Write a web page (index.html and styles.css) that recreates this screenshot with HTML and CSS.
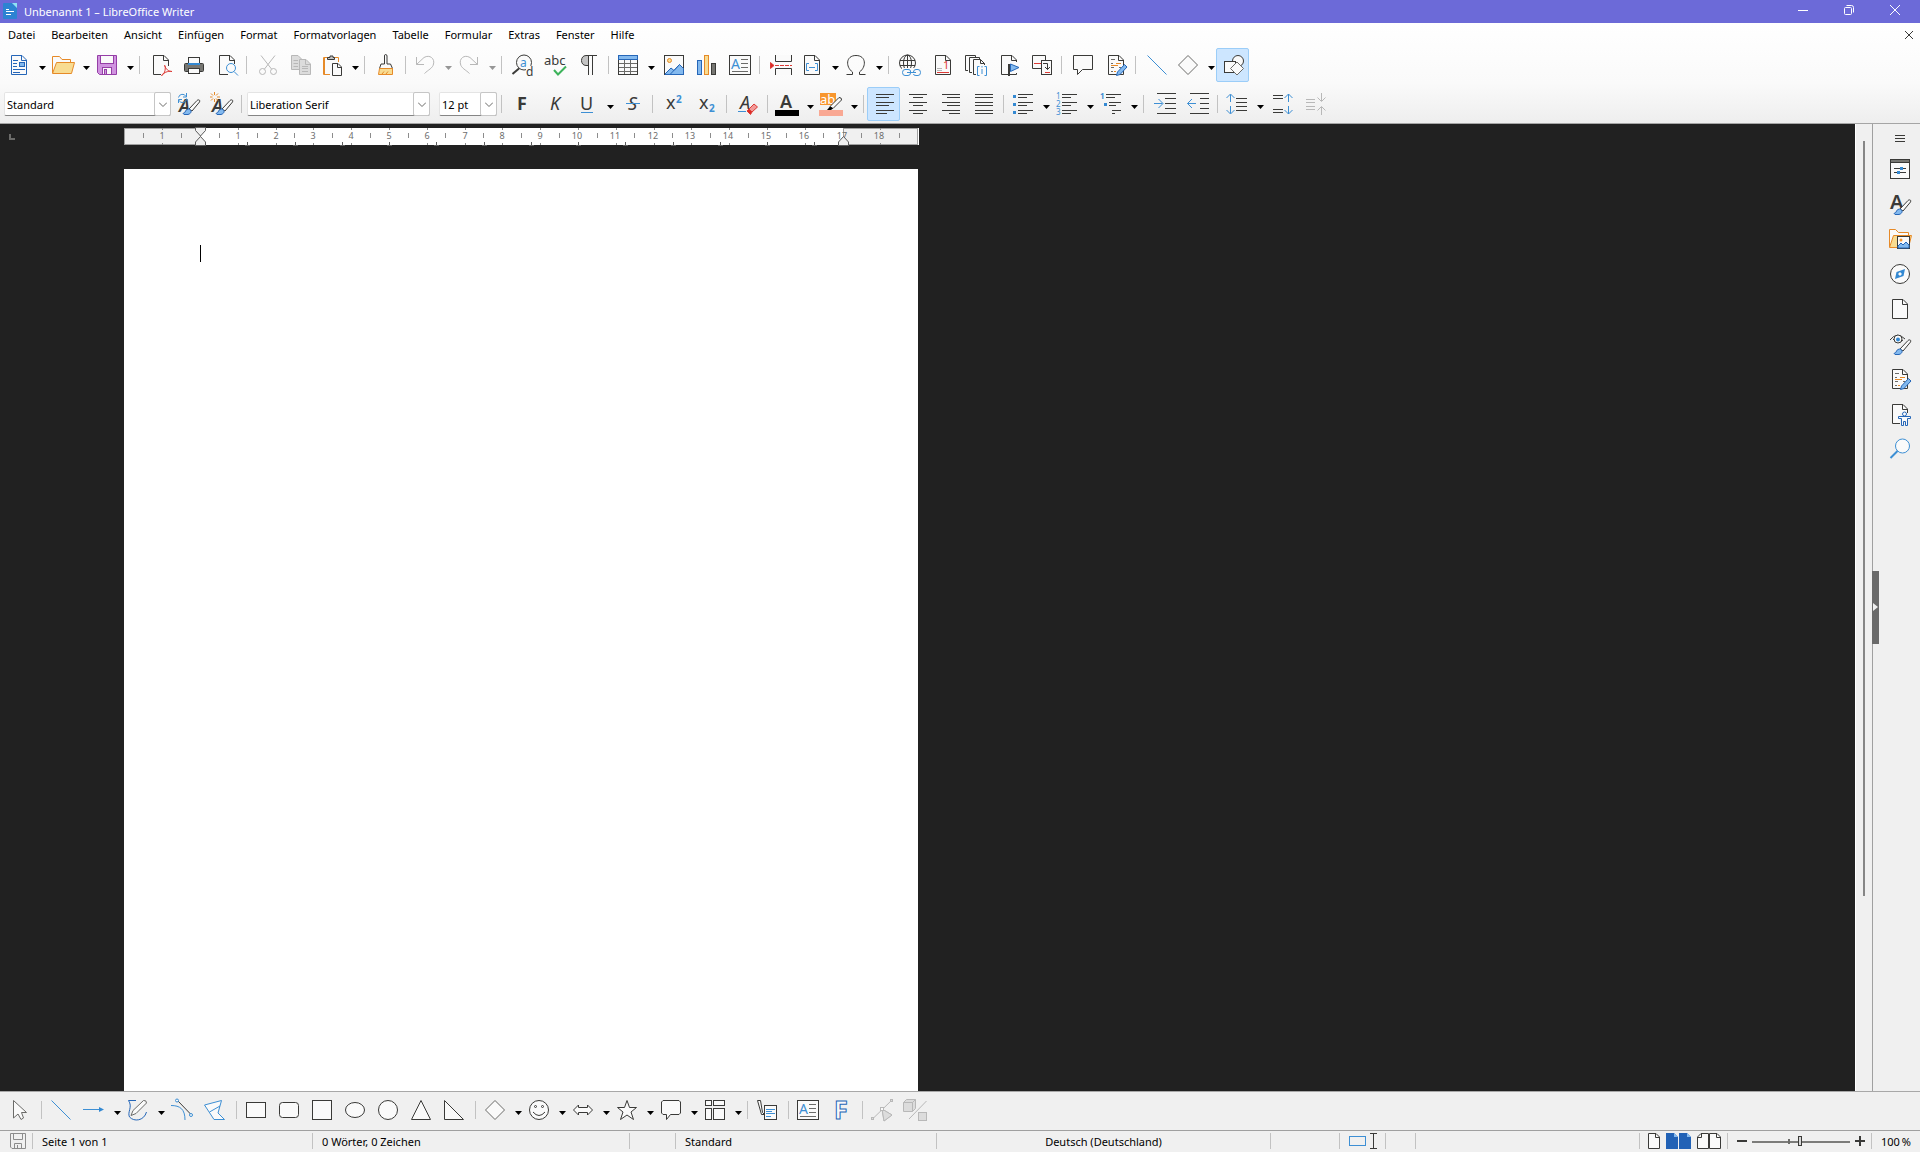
FILE: index.html
```html
<!DOCTYPE html>
<html lang="de">
<head>
<meta charset="utf-8">
<title>Unbenannt 1 – LibreOffice Writer</title>
<meta name="viewport" content="width=device-width, initial-scale=1.0">
<link rel="stylesheet" href="styles.css">
</head>
<body>

<!-- Shared symbols -->
<svg class="symbols" aria-hidden="true">
	<symbol id="i-drop" viewBox="0 0 7 4"><path class="f-black" d="M0 0H7L3.500 4Z"/></symbol>
	<symbol id="i-page" viewBox="0 0 24 24"><path class="f-paper" d="M4.500 2.500H15L19.500 7V21.500H4.500Z"/><path d="M14.500 2.500V7.500H19.500"/></symbol>
	<symbol id="i-brush" viewBox="0 0 24 24"><path class="f-paper" d="M12 17L20 8.500C21 7.500 23.500 7.500 22.500 10L15 19Z"/><path class="s-navy f-sky" d="M6 21.500C9 21 8 17 11.500 17C15 17.500 15 21.500 11 22.500H7Z"/></symbol>
	<symbol id="i-diamond" viewBox="0 0 24 24"><path class="f-paper s-mid" d="M12 2.500L21.500 12L12 21.500L2.500 12Z"/></symbol>
	<symbol id="i-line" viewBox="0 0 24 24"><path class="s-blue" d="M2.500 2.500L21.500 21.500"/></symbol>
	<symbol id="i-textbox" viewBox="0 0 24 24"><rect class="f-paper" x="1.500" y="2.500" width="21" height="19"/><text class="t-blue" x="3" y="16" font-size="14">A</text><path class="s-mid" d="M13 6.500H20M13 10.500H20M13 14.500H20M4 18.500H20"/></symbol>
	<symbol id="i-track" viewBox="0 0 24 24"><path class="f-paper" d="M4.500 2.500H15L19.500 7V21.500H4.500Z"/><path d="M14.500 2.500V7.500H19.500"/><path class="s-mid" d="M7 6.500H11M7 10.500H9M7 14.500H10M15 14.500H17M7 18.500H9"/><path class="s-orange" d="M12 10.500H17M7 12.500H14M10 18.500H12"/><path class="s-navy f-sky" d="M12.500 22.500L13.500 19L20.500 11.500L23 14L16 21.500Z"/></symbol>
</svg>

<header class="titlebar">
	<svg class="app-icon" viewBox="0 0 14 16"><path class="f-app" d="M1 0H9L14 5V15Q14 16 13 16H1Q0 16 0 15V1Q0 0 1 0Z"/><path class="f-cyan" d="M9 0H14V5Z"/><path class="s-white" d="M3 6.500H6M3 8.500H11M3 11.500H8"/></svg>
	<h1 class="title">Unbenannt 1 – LibreOffice Writer</h1>
	<div class="window-buttons">
		<button class="win-btn" aria-label="Minimieren"><svg viewBox="0 0 10 10"><path class="s-white" d="M0 5.500H10"/></svg></button>
		<button class="win-btn" aria-label="Verkleinern"><svg viewBox="0 0 10 10"><rect class="s-white" x=".5" y="2.500" width="7" height="7" rx="1"/><path class="s-white" d="M2.500 .5H7.500Q9.500 .5 9.500 2.500V7.500"/></svg></button>
		<button class="win-btn" aria-label="Schließen"><svg viewBox="0 0 10 10"><path class="s-white" d="M0 0L10 10M10 0L0 10"/></svg></button>
	</div>
</header>

<div class="toolbars">
	<nav class="menubar">
		<button class="menu-item">Datei</button>
		<button class="menu-item">Bearbeiten</button>
		<button class="menu-item">Ansicht</button>
		<button class="menu-item">Einfügen</button>
		<button class="menu-item">Format</button>
		<button class="menu-item">Formatvorlagen</button>
		<button class="menu-item">Tabelle</button>
		<button class="menu-item">Formular</button>
		<button class="menu-item">Extras</button>
		<button class="menu-item">Fenster</button>
		<button class="menu-item">Hilfe</button>
		<button class="close-doc" aria-label="Dokument schließen"><svg viewBox="0 0 8 8"><path d="M0 0L8 8M8 0L0 8"/></svg></button>
	</nav>

	<!-- Standard toolbar -->
	<div class="toolbar">
		<div class="split">
			<button class="tool" aria-label="Neu"><svg class="icon" viewBox="0 0 24 24"><path class="s-navy f-paper" d="M4.500 2.500H15L19.500 7V21.500H4.500Z"/><path class="s-navy" d="M14.500 2.500V7.500H19.500M6 7.500H11M6 10.500H10M6 13.500H10M6 16.500H18M6 19.500H13"/><rect class="f-sky s-navy" x="12.500" y="9.500" width="5" height="4"/></svg></button>
			<button class="drop" aria-label="Neu, Auswahl"><svg><use href="#i-drop"/></svg></button>
		</div>
		<div class="split">
			<button class="tool" aria-label="Öffnen"><svg class="icon" viewBox="0 0 24 24"><path class="s-orange f-paper" d="M1.500 20V3.500H8.500L11 6.500H19.500V9.500"/><path class="s-orange f-yellow" d="M1.500 20.500L5.500 9.500H23.500L20.500 20.500Z"/></svg></button>
			<button class="drop" aria-label="Öffnen, Auswahl"><svg><use href="#i-drop"/></svg></button>
		</div>
		<div class="split">
			<button class="tool" aria-label="Speichern"><svg class="icon" viewBox="0 0 24 24"><path class="s-purple f-lilac" d="M2.500 2.500H21.500V21.500H4.500L2.500 19.500Z"/><rect class="s-purple f-paper" x="5.500" y="2.500" width="13" height="8"/><rect class="s-purple f-paper" x="7.500" y="14.500" width="9" height="7"/><rect class="s-purple f-lilac" x="9.500" y="16.500" width="2" height="5"/></svg></button>
			<button class="drop" aria-label="Speichern, Auswahl"><svg><use href="#i-drop"/></svg></button>
		</div>
		<span class="sep"></span>
		<button class="tool" aria-label="Als PDF exportieren"><svg class="icon" viewBox="0 0 24 24"><path class="f-paper" d="M12 21.500H4.500V2.500H15L19.500 7V13"/><path d="M14.500 2.500V7.500H19.500"/><path class="s-red" d="M15.500 12.500C17 16 19 18.500 23 18.500C19 17.500 14 20 12.500 22.500C15 22 17 17 16 12.500Z"/></svg></button>
		<button class="tool" aria-label="Drucken"><svg class="icon" viewBox="0 0 24 24"><rect class="f-paper" x="6.500" y="4.500" width="11" height="6"/><rect class="f-mid" x="2.500" y="10.500" width="19" height="8" rx="1"/><path class="f-azure" d="M6 10H18V12H6Z"/><rect class="f-paper" x="6.500" y="15.500" width="11" height="5"/></svg></button>
		<button class="tool" aria-label="Druckvorschau"><svg class="icon" viewBox="0 0 24 24"><path class="f-paper" d="M13 21.500H4.500V2.500H15L19.500 7V11"/><path d="M14.500 2.500V7.500H19.500"/><circle class="s-blue f-paper" cx="16" cy="15" r="4.500"/><path class="s-blue" d="M19 18.500L23 22.500"/></svg></button>
		<span class="sep"></span>
		<button class="tool" aria-label="Ausschneiden" disabled><svg class="icon dim" viewBox="0 0 24 24"><path d="M5 2.500L15.500 16M19 2.500L8.500 16"/><circle cx="6.500" cy="18.500" r="3"/><circle cx="17.500" cy="18.500" r="3"/></svg></button>
		<button class="tool" aria-label="Kopieren" disabled><svg class="icon dim" viewBox="0 0 24 24"><path class="f-dim" d="M2.500 2.500H9L12.500 6V16.500H2.500Z"/><path class="f-dim" d="M10.500 6.500H17L21.500 11V21.500H10.500Z"/><path d="M16.500 6.500V11.500H21.500M4.500 7.500H9M4.500 10.500H9M4.500 13.500H9M13 13.500H19M13 15.500H19M13 18.500H19"/></svg></button>
		<div class="split">
			<button class="tool" aria-label="Einfügen"><svg class="icon" viewBox="0 0 24 24"><path class="s-orange f-paper" d="M10 21.500H3.500V4.500H18.500V9"/><path class="s-orange" d="M4.500 5V21"/><path class="f-grey" d="M7.500 6.500V4.500H10V3H13V4.500H14.500V6.500Z"/><path class="f-paper" d="M12.500 10.500H18L21.500 14V22.500H12.500Z"/><path d="M17.500 10.500V14.500H21.500"/></svg></button>
			<button class="drop" aria-label="Einfügen, Auswahl"><svg><use href="#i-drop"/></svg></button>
		</div>
		<span class="sep"></span>
		<button class="tool" aria-label="Format übertragen"><svg class="icon" viewBox="0 0 24 24"><path class="f-paper" d="M10.500 11V3Q10.500 1.500 11.500 1.500Q13 1.500 13 3V11H16.500L18.500 15.500H5.500L7 11Z"/><path class="s-orange f-yellow" d="M5.500 15.500H18.500V21.500H4.500Z"/><path class="s-orange" d="M8 21L10 18.500M12 21L14 18.500"/></svg></button>
		<span class="sep"></span>
		<div class="split">
			<button class="tool" aria-label="Rückgängig" disabled><svg class="icon dim" viewBox="0 0 24 24"><path d="M3.500 4V11.500H11M3.500 11.500L11 4.500C17 1 22 6 20.500 11C20 15 15 17 11.500 20.500"/></svg></button>
			<button class="drop" aria-label="Rückgängig, Auswahl" disabled><svg><use href="#i-drop"/></svg></button>
		</div>
		<div class="split">
			<button class="tool" aria-label="Wiederherstellen" disabled><svg class="icon dim" viewBox="0 0 24 24"><path d="M20.500 4V11.500H13M20.500 11.500L13 4.500C7 1 2 6 3.500 11C4 15 9 17 12.500 20.500"/></svg></button>
			<button class="drop" aria-label="Wiederherstellen, Auswahl" disabled><svg><use href="#i-drop"/></svg></button>
		</div>
		<span class="sep"></span>
		<button class="tool" aria-label="Suchen und Ersetzen"><svg class="icon" viewBox="0 0 24 24"><circle class="f-paper" cx="13" cy="9.500" r="7.500"/><path class="w2" d="M8 15.500L1.500 21"/><text class="t-blue" x="9" y="14" font-size="12">a</text><rect class="f-bg nostroke" x="15" y="13" width="9" height="10"/><text class="t-dark" x="15" y="23" font-size="12">d</text></svg></button>
		<button class="tool" aria-label="Rechtschreibung"><svg class="icon" viewBox="0 0 24 24"><text class="t-dark" x="0" y="12" font-size="13">abc</text><path class="s-green w2" d="M10 17L14 21.500L22 13.500"/></svg></button>
		<button class="tool" aria-label="Formatierungszeichen"><svg class="icon" viewBox="0 0 24 24"><path class="f-grey" d="M11.500 2.500H9C3 2.500 3 12.500 9 12.500H11.500Z"/><path d="M10 2.500H20M11.500 2.500V22M15.500 2.500V22"/></svg></button>
		<span class="sep"></span>
		<div class="split">
			<button class="tool" aria-label="Tabelle"><svg class="icon" viewBox="0 0 24 24"><rect class="f-paper" x="2.500" y="2.500" width="19" height="19"/><path class="s-mid" d="M3 10.500H21M3 14.500H21M3 18.500H21M8.500 7V21M14.500 7V21"/><rect class="s-navy f-sky" x="2.500" y="2.500" width="19" height="4"/></svg></button>
			<button class="drop" aria-label="Tabelle, Auswahl"><svg><use href="#i-drop"/></svg></button>
		</div>
		<button class="tool" aria-label="Bild"><svg class="icon" viewBox="0 0 24 24"><rect class="f-paper" x="2.500" y="2.500" width="19" height="19"/><circle class="s-orange f-yellow" cx="7.500" cy="7.500" r="2"/><path class="s-navy f-sky" d="M3 21L9 15L12 17.500L17.500 11.500L21.500 15.500V21.500H3Z"/><path class="s-navy" d="M8.500 21L17.500 11.500"/></svg></button>
		<button class="tool" aria-label="Diagramm"><svg class="icon" viewBox="0 0 24 24"><rect class="s-navy f-sky" x="2.500" y="7.500" width="4" height="14"/><rect class="s-orange f-yellow" x="9.500" y="2.500" width="4" height="19"/><rect class="f-mid" x="16.500" y="10.500" width="4" height="11"/></svg></button>
		<button class="tool" aria-label="Textfeld"><svg class="icon"><use href="#i-textbox"/></svg></button>
		<span class="sep"></span>
		<button class="tool" aria-label="Seitenumbruch"><svg class="icon" viewBox="0 0 24 24"><path class="f-paper" d="M6.500 2V8.500H22.500V2M6.500 22V15.500H22.500V22"/><path class="s-red" d="M6 12.500H23" stroke-dasharray="4 1"/><path class="s-red f-red" d="M1.500 9.500L5 12.500L1.500 15.500Z"/></svg></button>
		<div class="split">
			<button class="tool" aria-label="Feldbefehl"><svg class="icon" viewBox="0 0 24 24"><use href="#i-page"/><path class="s-blue" d="M9 10.500H6.500V17.500H9M15 10.500H17.500V17.500H15M9 14.500H15"/></svg></button>
			<button class="drop" aria-label="Feldbefehl, Auswahl"><svg><use href="#i-drop"/></svg></button>
		</div>
		<div class="split">
			<button class="tool" aria-label="Sonderzeichen"><svg class="icon" viewBox="0 0 24 24"><path d="M2.500 21.500H8.500V19C1.500 14 1.500 2.500 12 2.500C22.500 2.500 22.500 14 15.500 19V21.500H21.500"/></svg></button>
			<button class="drop" aria-label="Sonderzeichen, Auswahl"><svg><use href="#i-drop"/></svg></button>
		</div>
		<span class="sep"></span>
		<button class="tool" aria-label="Hyperlink"><svg class="icon" viewBox="0 0 24 24"><circle class="f-paper" cx="9.500" cy="10" r="8"/><ellipse cx="9.500" cy="10" rx="4" ry="8"/><path d="M2 7.500H17M2 12.500H17M9.500 2V18"/><rect class="f-bg nostroke" x="4" y="15" width="20" height="8"/><path class="s-blue" d="M10 16.500H7Q4.500 16.500 4.500 19.500Q4.500 22.500 7 22.500H10Q12.500 22.500 12.500 20M15.500 19Q15.500 16.500 18 16.500H20Q22.500 16.500 22.500 19.500Q22.500 22.500 20 22.500H18Q15.500 22.500 15.500 21M12.500 19V18Q12.500 16.500 10 16.500M9 19.500H18"/></svg></button>
		<button class="tool" aria-label="Fußnote"><svg class="icon" viewBox="0 0 24 24"><use href="#i-page"/><text class="t-red" x="12" y="16" font-size="11">1</text><path class="s-grey" d="M6 15.500H11M6 17.500H11"/><path class="s-red" d="M6 19.500H18"/></svg></button>
		<button class="tool" aria-label="Endnote"><svg class="icon" viewBox="0 0 24 24"><path class="f-paper" d="M4 17.500H1.500V2.500H11.500V4"/><path class="f-paper" d="M8 19.500H5.500V4.500H15.500V6"/><path class="f-paper" d="M12 21.500H9.500V6.500H16.500L20.500 10.500V12"/><path d="M16.500 6.500V10.500H20.500"/><path class="s-blue" d="M15.500 13.500H13.500V22.500H15.500M20.500 13.500H22.500V22.500H20.500M18 13V14.500M18 16V21"/></svg></button>
		<button class="tool" aria-label="Lesezeichen"><svg class="icon" viewBox="0 0 24 24"><use href="#i-page"/><rect class="f-bg nostroke" x="14" y="9" width="7" height="11"/><path class="w2" d="M12 11V23"/><path class="s-navy f-sky" d="M13.500 11L22 14.500L13.500 18.500Z"/></svg></button>
		<button class="tool" aria-label="Querverweis"><svg class="icon" viewBox="0 0 24 24"><path class="f-paper" d="M11 15.500H2.500V2.500H15.500V7"/><rect class="f-paper" x="11.500" y="7.500" width="10" height="14"/><path class="s-red" d="M4 10.500H11M15 19.500H20"/><path d="M13 10.500H17.500V16.500M15 14L17.500 16.500L20 14"/></svg></button>
		<span class="sep"></span>
		<button class="tool" aria-label="Kommentar"><svg class="icon" viewBox="0 0 24 24"><path class="f-paper" d="M2.500 2.500H21.500V16.500H11.500L6.500 21.500V16.500H2.500Z"/></svg></button>
		<button class="tool" aria-label="Änderungen aufzeichnen"><svg class="icon"><use href="#i-track"/></svg></button>
		<span class="sep"></span>
		<button class="tool" aria-label="Linie"><svg class="icon"><use href="#i-line"/></svg></button>
		<div class="split">
			<button class="tool" aria-label="Standardformen"><svg class="icon"><use href="#i-diamond"/></svg></button>
			<button class="drop" aria-label="Standardformen, Auswahl"><svg><use href="#i-drop"/></svg></button>
		</div>
		<button class="tool active" aria-label="Zeichnungsfunktionen"><svg class="icon" viewBox="0 0 24 24"><circle class="f-paper" cx="16" cy="8" r="5.500"/><rect class="f-paper" x="2.500" y="8.500" width="11" height="11"/><path class="f-paper s-mid" d="M15 9L21.500 15.500L15 22L8.500 15.500Z"/></svg></button>
	</div>

	<!-- Formatting toolbar -->
	<div class="toolbar format-bar">
		<div class="combo combo-style">
			<select aria-label="Absatzvorlage"><option>Standard</option></select>
			<span class="combo-arrow"><svg viewBox="0 0 8 5"><path class="s-mid" d="M0 .5L4 4.500L8 .5"/></svg></span>
		</div>
		<button class="tool" aria-label="Vorlage aktualisieren"><svg class="icon" viewBox="0 0 24 24"><text class="t-dark semi italic" x="2" y="20" font-size="18">A</text><use href="#i-brush"/><path class="s-blue" d="M1.500 5.500A4 4 0 0 1 9 4.500M9.500 1V5H6M9.500 6.500A4 4 0 0 1 2 8.500M1.500 11V7.500H5"/></svg></button>
		<button class="tool" aria-label="Neue Vorlage"><svg class="icon" viewBox="0 0 24 24"><text class="t-dark semi italic" x="2" y="20" font-size="18">A</text><use href="#i-brush"/><path class="s-orange" d="M4.500 0V3M4.500 7V10M0 5H2.500M7 5H10M1 1.500L3 3.500M8 1.500L6 3.500M1 8.500L3 6.500M8 8.500L6 6.500"/></svg></button>
		<span class="sep"></span>
		<div class="combo combo-font">
			<select aria-label="Schriftart"><option>Liberation Serif</option></select>
			<span class="combo-arrow"><svg viewBox="0 0 8 5"><path class="s-mid" d="M0 .5L4 4.500L8 .5"/></svg></span>
		</div>
		<div class="combo combo-size">
			<select aria-label="Schriftgröße"><option>12 pt</option></select>
			<span class="combo-arrow"><svg viewBox="0 0 8 5"><path class="s-mid" d="M0 .5L4 4.500L8 .5"/></svg></span>
		</div>
		<span class="sep"></span>
		<button class="tool" aria-label="Fett"><svg class="icon" viewBox="0 0 24 24"><text class="t-dark bold" x="6" y="18" font-size="18">F</text></svg></button>
		<button class="tool" aria-label="Kursiv"><svg class="icon" viewBox="0 0 24 24"><text class="t-dark italic" x="6" y="18" font-size="18">K</text></svg></button>
		<div class="split">
			<button class="tool" aria-label="Unterstrichen"><svg class="icon" viewBox="0 0 24 24"><text class="t-dark" x="5" y="18" font-size="18">U</text><path class="s-blue" d="M6 20.500H18"/></svg></button>
			<button class="drop" aria-label="Unterstrichen, Auswahl"><svg><use href="#i-drop"/></svg></button>
		</div>
		<button class="tool" aria-label="Durchgestrichen"><svg class="icon" viewBox="0 0 24 24"><text class="t-dark italic" x="7" y="18" font-size="18">S</text><path class="s-blue" d="M5 11.500H19"/></svg></button>
		<span class="sep"></span>
		<button class="tool" aria-label="Hochgestellt"><svg class="icon" viewBox="0 0 24 24"><text class="t-dark" x="4" y="17" font-size="18">x</text><text class="t-blue bold" x="14" y="11" font-size="10">2</text></svg></button>
		<button class="tool" aria-label="Tiefgestellt"><svg class="icon" viewBox="0 0 24 24"><text class="t-dark" x="4" y="17" font-size="18">x</text><text class="t-blue bold" x="14" y="20" font-size="10">2</text></svg></button>
		<span class="sep"></span>
		<button class="tool" aria-label="Formatierung löschen"><svg class="icon" viewBox="0 0 24 24"><text class="t-dark italic" x="4" y="17" font-size="18">A</text><path class="s-blue" d="M2 19.500H10"/><path class="s-red f-pink" d="M13 17L18 12L21.500 15L16 20Z"/><path class="s-red f-red" d="M11 19L13 17L16 20L14.500 22.500Z"/></svg></button>
		<span class="sep"></span>
		<div class="split">
			<button class="tool" aria-label="Schriftfarbe"><svg class="icon" viewBox="0 0 24 24"><text class="t-dark semi" x="5" y="16" font-size="18">A</text><path class="f-black" d="M0 18H24V24H0Z"/></svg></button>
			<button class="drop" aria-label="Schriftfarbe, Auswahl"><svg><use href="#i-drop"/></svg></button>
		</div>
		<div class="split">
			<button class="tool" aria-label="Zeichenhervorhebung"><svg class="icon" viewBox="0 0 24 24"><path class="f-amber" d="M1 1H17V13H1Z"/><text class="t-white" x="1" y="12" font-size="13">ab</text><path class="f-salmon" d="M0 18H24V24H0Z"/><path class="f-paper" d="M11 14.500L20 5.500Q23 5.500 22.500 8L14 16.500Z"/><path class="f-black" d="M8 18L11 14.500L14 16.500L12 18Z"/></svg></button>
			<button class="drop" aria-label="Zeichenhervorhebung, Auswahl"><svg><use href="#i-drop"/></svg></button>
		</div>
		<span class="sep"></span>
		<button class="tool active" aria-label="Linksbündig"><svg class="icon" viewBox="0 0 24 24"><path d="M3 2.500H21M3 5.500H16M3 10.500H21M3 13.500H16M3 18.500H21M3 21.500H14"/></svg></button>
		<button class="tool" aria-label="Zentriert"><svg class="icon" viewBox="0 0 24 24"><path d="M3 2.500H21M7 5.500H17M3 10.500H21M7 13.500H17M3 18.500H21M7 21.500H17"/></svg></button>
		<button class="tool" aria-label="Rechtsbündig"><svg class="icon" viewBox="0 0 24 24"><path d="M3 2.500H21M8 5.500H21M3 10.500H21M8 13.500H21M3 18.500H21M10 21.500H21"/></svg></button>
		<button class="tool" aria-label="Blocksatz"><svg class="icon" viewBox="0 0 24 24"><path d="M3 2.500H21M3 5.500H21M3 10.500H21M3 13.500H21M3 18.500H21M3 21.500H21"/></svg></button>
		<span class="sep"></span>
		<div class="split">
			<button class="tool" aria-label="Aufzählung"><svg class="icon" viewBox="0 0 24 24"><path d="M7 2.500H22M7 5.500H16M7 10.500H22M7 13.500H16M7 18.500H22M7 21.500H16"/><path class="f-azure" d="M2 3H5V6H2ZM2 11H5V14H2ZM2 19H5V22H2Z"/></svg></button>
			<button class="drop" aria-label="Aufzählung, Auswahl"><svg><use href="#i-drop"/></svg></button>
		</div>
		<div class="split">
			<button class="tool" aria-label="Nummerierung"><svg class="icon" viewBox="0 0 24 24"><path d="M7 2.500H22M7 5.500H16M7 10.500H22M7 13.500H16M7 18.500H22M7 21.500H16"/><text class="t-blue" x="1" y="7" font-size="8">1</text><text class="t-blue" x="1" y="15" font-size="8">2</text><text class="t-blue" x="1" y="23" font-size="8">3</text></svg></button>
			<button class="drop" aria-label="Nummerierung, Auswahl"><svg><use href="#i-drop"/></svg></button>
		</div>
		<div class="split">
			<button class="tool" aria-label="Gliederung"><svg class="icon" viewBox="0 0 24 24"><path d="M7 2.500H22M7 5.500H16M10 10.500H22M10 13.500H17M13 18.500H22M13 21.500H16"/><text class="t-blue bold" x="1" y="7" font-size="8">1</text><path class="f-azure" d="M5 11H8V14H5Z"/></svg></button>
			<button class="drop" aria-label="Gliederung, Auswahl"><svg><use href="#i-drop"/></svg></button>
		</div>
		<span class="sep"></span>
		<button class="tool" aria-label="Einzug erhöhen"><svg class="icon" viewBox="0 0 24 24"><path d="M4 1.500H23M12 6.500H23M12 11.500H23M12 16.500H23M4 21.500H23"/><path class="s-blue" d="M1 11.500H9.500M5.500 7L10 11.500L5.500 16"/></svg></button>
		<button class="tool" aria-label="Einzug verringern"><svg class="icon" viewBox="0 0 24 24"><path d="M4 1.500H23M14 6.500H23M14 11.500H23M14 16.500H23M4 21.500H23"/><path class="s-blue" d="M1.500 11.500H10M6 7L1.500 11.500L6 16"/></svg></button>
		<span class="sep"></span>
		<div class="split">
			<button class="tool" aria-label="Zeilenabstand"><svg class="icon" viewBox="0 0 24 24"><path d="M11 6.500H22M11 10.500H22M11 14.500H22M11 18.500H22"/><path class="s-blue" d="M5.500 10V2.500M1.500 6L5.500 2L9.500 6M5.500 14V21.500M1.500 18L5.500 22L9.500 18"/></svg></button>
			<button class="drop" aria-label="Zeilenabstand, Auswahl"><svg><use href="#i-drop"/></svg></button>
		</div>
		<button class="tool" aria-label="Absatzabstand erhöhen"><svg class="icon" viewBox="0 0 24 24"><path d="M2 3.500H12M2 6.500H12M2 17.500H12M2 20.500H12"/><path class="s-blue" d="M17.500 10V2M13.500 6L17.500 2L21.500 6M17.500 14V22M13.500 18L17.500 22L21.500 18"/></svg></button>
		<button class="tool" aria-label="Absatzabstand verringern" disabled><svg class="icon dim" viewBox="0 0 24 24"><path d="M2 7.500H11M2 10.500H11M2 14.500H11M2 17.500H11M17.500 1V9M13.500 5.500L17.500 9.500L21.500 5.500M17.500 23V15M13.500 18.500L17.500 14.500L21.500 18.500"/></svg></button>
	</div>
</div>

<main class="workspace">
	<section class="editor">
		<div class="ruler-row">
			<svg class="tab-type" viewBox="0 0 6 6"><path class="s-mid w2" d="M1 0V5H6"/></svg>
			<svg class="ruler" viewBox="0 0 795 20">
				<rect class="r-white" x="0" y="2" width="795" height="17"/>
				<rect class="r-margin" x=".5" y="2.500" width="76" height="16"/>
				<rect class="r-margin" x="719.500" y="2.500" width="74" height="16"/>
				<path class="r-tick" d="M19.500 7V12M57.500 7V12M95.500 7V12M133.500 7V12M170.500 7V12M208.500 7V12M246.500 7V12M284.500 7V12M321.500 7V12M359.500 7V12M397.500 7V12M435.500 7V12M473.500 7V12M510.500 7V12M548.500 7V12M586.500 7V12M624.500 7V12M662.500 7V12M699.500 7V12M737.500 7V12M775.500 7V12"/>
				<path class="r-tick" d="M38.500 2V4M114.500 2V4M152.500 2V4M189.500 2V4M227.500 2V4M265.500 2V4M303.500 2V4M341.500 2V4M378.500 2V4M416.500 2V4M454.500 2V4M492.500 2V4M530.500 2V4M567.500 2V4M605.500 2V4M643.500 2V4M681.500 2V4M756.500 2V4"/>
				<path class="r-tick" d="M38.500 17V19M114.500 17V19M152.500 17V19M189.500 17V19M227.500 17V19M265.500 17V19M303.500 17V19M341.500 17V19M378.500 17V19M416.500 17V19M454.500 17V19M492.500 17V19M530.500 17V19M567.500 17V19M605.500 17V19M643.500 17V19M681.500 17V19M756.500 17V19"/>
				<path class="r-tab" d="M123.500 16V19M121 19.500H126M171.500 16V19M169 19.500H174M218.500 16V19M216 19.500H221M265.500 16V19M263 19.500H268M312.500 16V19M310 19.500H315M360.500 16V19M358 19.500H363M407.500 16V19M405 19.500H410M454.500 16V19M452 19.500H457M501.500 16V19M499 19.500H504M549.500 16V19M547 19.500H552M596.500 16V19M594 19.500H599M643.500 16V19M641 19.500H646M690.500 16V19M688 19.500H693"/>
				<g class="r-num">
					<text x="38" y="13">1</text><text x="114" y="13">1</text><text x="152" y="13">2</text><text x="189" y="13">3</text><text x="227" y="13">4</text><text x="265" y="13">5</text><text x="303" y="13">6</text><text x="341" y="13">7</text><text x="378" y="13">8</text><text x="416" y="13">9</text><text x="453" y="13">10</text><text x="491" y="13">11</text><text x="529" y="13">12</text><text x="566" y="13">13</text><text x="604" y="13">14</text><text x="642" y="13">15</text><text x="680" y="13">16</text><text x="718" y="13">17</text><text x="755" y="13">18</text>
				</g>
				<path class="r-marker" d="M71.500 1.500H81.500V4.500L76.500 10L71.500 4.500Z"/>
				<path class="r-marker" d="M71.500 19.500H81.500V16L76.500 10.500L71.500 16Z"/>
				<path class="r-marker" d="M714.500 19.500H724.500V16L719.500 10.500L714.500 16Z"/>
			</svg>
		</div>
		<div class="page" role="textbox" aria-label="Dokument"><span class="caret"></span></div>
	</section>
	<div class="scrollbar"><div class="thumb"></div></div>
	<aside class="sidebar">
		<button class="collapse" aria-label="Seitenleiste ausblenden"><svg viewBox="0 0 5 8"><path class="f-light" d="M0 0L5 4L0 8Z"/></svg></button>
		<button class="side-menu" aria-label="Seitenleiste-Einstellungen"><svg viewBox="0 0 10 7"><path d="M0 .5H10M0 3.500H10M0 6.500H10"/></svg></button>
		<button class="side-btn" aria-label="Eigenschaften"><svg class="icon" viewBox="0 0 24 24"><rect class="f-paper" x="2.500" y="2.500" width="19" height="19"/><rect class="f-mid" x="2.500" y="2.500" width="19" height="3"/><path d="M6 11.500H18M6 15.500H18"/><path class="f-azure" d="M12 10H15V13H12ZM9 14H12V17H9Z"/></svg></button>
		<button class="side-btn" aria-label="Formatvorlagen"><svg class="icon" viewBox="0 0 24 24"><text class="t-dark semi" x="2" y="17" font-size="20">A</text><use href="#i-brush"/></svg></button>
		<button class="side-btn" aria-label="Galerie"><svg class="icon" viewBox="0 0 24 24"><path class="s-orange f-paper" d="M1.500 20V2.500H7.500L10.500 5.500H20.500V8.500"/><path class="s-orange f-yellow" d="M1.500 20.500L5.500 8.500H23.500L20.500 20.500Z"/><rect class="f-paper" x="9.500" y="9.500" width="12" height="12"/><circle class="f-amber" cx="13" cy="13" r="1.500"/><path class="s-navy f-sky" d="M10 19L13 16L15 18L18 15L21 18V21H10Z"/></svg></button>
		<button class="side-btn" aria-label="Navigator"><svg class="icon" viewBox="0 0 24 24"><circle class="f-paper" cx="12" cy="12" r="9.500"/><path class="f-azure" fill-rule="evenodd" d="M17 7L15.500 14L7 17L8.500 10ZM12 10L10 12L12 14L14 12Z"/></svg></button>
		<button class="side-btn" aria-label="Seite"><svg class="icon"><use href="#i-page"/></svg></button>
		<button class="side-btn" aria-label="Stil-Inspektor"><svg class="icon" viewBox="0 0 24 24"><path class="f-paper" d="M2 8Q9 -1 17 7M5 7Q10 13 15 8"/><circle class="f-paper" cx="10" cy="7" r="4"/><circle class="f-azure" cx="10" cy="7.500" r="2"/><use href="#i-brush"/></svg></button>
		<button class="side-btn" aria-label="Änderungen verwalten"><svg class="icon"><use href="#i-track"/></svg></button>
		<button class="side-btn" aria-label="Barrierefreiheit"><svg class="icon" viewBox="0 0 24 24"><use href="#i-page"/><rect class="f-side nostroke" x="12" y="11" width="9" height="12"/><circle class="s-navy f-paper" cx="16.500" cy="12" r="2"/><path class="s-navy f-paper" d="M10.500 14.500H22.500V16.500H19.500V23.500H17.500V19.500H15.500V23.500H13.500V16.500H10.500Z"/></svg></button>
		<button class="side-btn" aria-label="Suchen"><svg class="icon" viewBox="0 0 24 24"><circle class="s-blue f-paper" cx="14.500" cy="9" r="7"/><path class="s-blue w2" d="M9.500 14L2.500 21"/></svg></button>
	</aside>
</main>

<!-- Drawing toolbar -->
<div class="drawbar">
	<button class="tool" aria-label="Auswählen"><svg class="icon" viewBox="0 0 24 24"><path class="f-paper s-mid" d="M5.500 2.500L18.500 14.500H13.500L15.500 20L13 21.500L10 16L5.500 20Z"/></svg></button>
	<span class="sep"></span>
	<button class="tool" aria-label="Linie einfügen"><svg class="icon"><use href="#i-line"/></svg></button>
	<div class="split">
		<button class="tool" aria-label="Linien und Pfeile"><svg class="icon" viewBox="0 0 24 24"><path class="s-blue" d="M1 11.500H20"/><path class="f-azure" d="M17 9L22 11.500L17 14Z"/></svg></button>
		<button class="drop" aria-label="Linien und Pfeile, Auswahl"><svg><use href="#i-drop"/></svg></button>
	</div>
	<div class="split">
		<button class="tool" aria-label="Kurven und Polygone"><svg class="icon" viewBox="0 0 24 24"><path class="s-navy" d="M10 2.500H2.500C7 9 1 14 3.500 19C8 24 18 23 20.500 14"/><path class="f-paper s-mid" d="M5 17.500L7 12.500L17.500 2.500Q20.500 2 20.500 5L10 15.500Z"/></svg></button>
		<button class="drop" aria-label="Kurven und Polygone, Auswahl"><svg><use href="#i-drop"/></svg></button>
	</div>
	<button class="tool" aria-label="Bézierkurve"><svg class="icon" viewBox="0 0 24 24"><path class="s-blue" d="M1 7.500C10 7.500 15 11 15 22"/><path d="M7.500 2.500L21 16.500"/><circle class="s-blue f-paper" cx="7" cy="2.500" r="1.500"/><circle class="s-blue f-paper" cx="21" cy="17" r="1.500"/></svg></button>
	<button class="tool" aria-label="Polygon"><svg class="icon" viewBox="0 0 24 24"><path class="s-blue f-paper" d="M1.500 7L18.500 2.500L15 15L21.500 21.500H11Z"/><path class="s-blue" d="M6.500 14L17 8"/></svg></button>
	<span class="sep"></span>
	<button class="tool" aria-label="Rechteck"><svg class="icon" viewBox="0 0 24 24"><rect class="f-paper" x="2.500" y="4.500" width="19" height="15"/></svg></button>
	<button class="tool" aria-label="Abgerundetes Rechteck"><svg class="icon" viewBox="0 0 24 24"><rect class="f-paper" x="2.500" y="4.500" width="19" height="15" rx="3"/></svg></button>
	<button class="tool" aria-label="Quadrat"><svg class="icon" viewBox="0 0 24 24"><rect class="f-paper" x="2.500" y="2.500" width="19" height="19"/></svg></button>
	<button class="tool" aria-label="Ellipse"><svg class="icon" viewBox="0 0 24 24"><ellipse class="f-paper" cx="12" cy="12" rx="9.500" ry="7.500"/></svg></button>
	<button class="tool" aria-label="Kreis"><svg class="icon" viewBox="0 0 24 24"><circle class="f-paper" cx="12" cy="12" r="9.500"/></svg></button>
	<button class="tool" aria-label="Dreieck"><svg class="icon" viewBox="0 0 24 24"><path class="f-paper" d="M12 2.500L21.500 21.500H2.500Z"/></svg></button>
	<button class="tool" aria-label="Rechtwinkliges Dreieck"><svg class="icon" viewBox="0 0 24 24"><path class="f-paper" d="M2.500 2.500L21.500 21.500H2.500Z"/></svg></button>
	<span class="sep"></span>
	<div class="split">
		<button class="tool" aria-label="Formen"><svg class="icon"><use href="#i-diamond"/></svg></button>
		<button class="drop" aria-label="Formen, Auswahl"><svg><use href="#i-drop"/></svg></button>
	</div>
	<div class="split">
		<button class="tool" aria-label="Symbole"><svg class="icon" viewBox="0 0 24 24"><circle class="f-paper" cx="12" cy="12" r="9.500"/><circle cx="8.500" cy="8.500" r="1"/><circle cx="15.500" cy="8.500" r="1"/><path d="M6 14Q12 21 18 14"/></svg></button>
		<button class="drop" aria-label="Symbole, Auswahl"><svg><use href="#i-drop"/></svg></button>
	</div>
	<div class="split">
		<button class="tool" aria-label="Blockpfeile"><svg class="icon" viewBox="0 0 24 24"><path class="f-paper" d="M2.500 12L7.500 7V9.500H16.500V7L21.500 12L16.500 17V14.500H7.500V17Z"/></svg></button>
		<button class="drop" aria-label="Blockpfeile, Auswahl"><svg><use href="#i-drop"/></svg></button>
	</div>
	<div class="split">
		<button class="tool" aria-label="Sterne"><svg class="icon" viewBox="0 0 24 24"><path class="f-paper" d="M12 2.500L14.500 9.500H21.500L16 14L18.500 21.500L12 17L5.500 21.500L8 14L2.500 9.500H9.500Z"/></svg></button>
		<button class="drop" aria-label="Sterne, Auswahl"><svg><use href="#i-drop"/></svg></button>
	</div>
	<div class="split">
		<button class="tool" aria-label="Legenden"><svg class="icon" viewBox="0 0 24 24"><path class="f-paper" d="M4 2.500H20L21.500 4V15L20 16.500H11.500L7.500 21.500V16.500H4L2.500 15V4Z"/></svg></button>
		<button class="drop" aria-label="Legenden, Auswahl"><svg><use href="#i-drop"/></svg></button>
	</div>
	<div class="split">
		<button class="tool" aria-label="Flussdiagramm"><svg class="icon" viewBox="0 0 24 24"><rect class="f-paper" x="2.500" y="2.500" width="6" height="5"/><rect class="f-paper" x="10.500" y="2.500" width="11" height="5"/><rect class="f-paper" x="2.500" y="10.500" width="6" height="11"/><rect class="f-paper" x="10.500" y="10.500" width="11" height="11"/></svg></button>
		<button class="drop" aria-label="Flussdiagramm, Auswahl"><svg><use href="#i-drop"/></svg></button>
	</div>
	<span class="sep"></span>
	<button class="tool" aria-label="Legende"><svg class="icon" viewBox="0 0 24 24"><path class="f-paper" d="M2.500 2.500H5.500L7.500 14.500L9.500 16.500H6.500Z"/><rect class="f-paper" x="9.500" y="7.500" width="12" height="14"/><path class="s-blue" d="M11 11.500H20M11 13.500H17M11 15.500H20M11 18.500H16"/></svg></button>
	<span class="sep"></span>
	<button class="tool" aria-label="Textfeld einfügen"><svg class="icon"><use href="#i-textbox"/></svg></button>
	<button class="tool" aria-label="Fontwork"><svg class="icon" viewBox="0 0 24 24"><text class="t-outline bold" x="5" y="21" font-size="25">F</text></svg></button>
	<span class="sep"></span>
	<button class="tool" aria-label="Punkte bearbeiten" disabled><svg class="icon dim" viewBox="0 0 24 24"><path d="M3 20.500L22 2M12 11L14 23L22 17Z"/><path class="f-dim" d="M12 11L14 23L22 17Z"/><rect class="f-dim" x="1.500" y="19.500" width="2" height="2"/><rect class="f-dim" x="20.500" y="1.500" width="2" height="2"/><rect class="f-paper" x="10.500" y="9.500" width="3" height="3"/></svg></button>
	<button class="tool" aria-label="Extrusion" disabled><svg class="icon dim" viewBox="0 0 24 24"><path class="f-dim" d="M.5 4.500L3.500 1.500H12.500V10.500L9.500 13.500H.5ZM.5 4.500H9.500V13.500M9.500 4.500L12.500 1.500"/><path d="M23.500 3L6 21"/><rect class="f-dim" x="15.500" y="14.500" width="8" height="8"/></svg></button>
</div>

<footer class="statusbar">
	<div class="cell"><svg class="small-icon" viewBox="0 0 16 16"><path class="s-grey2" d="M.5 .5H15.500V15.500H2L.5 14ZM3.500 .5V6.500H12.500V.5M4.500 15.500V10.500H11.500V15.500M7.500 12V15"/></svg></div>
	<div class="cell">Seite 1 von 1</div>
	<div class="cell">0 Wörter, 0 Zeichen</div>
	<div class="cell"></div>
	<div class="cell">Standard</div>
	<div class="cell center">Deutsch (Deutschland)</div>
	<div class="cell"></div>
	<div class="cell"><svg class="select-icon" viewBox="0 0 28 16"><rect class="s-blue" x=".5" y="3.500" width="16" height="9"/><path d="M21 .5H28M24.500 .5V15.500M21 15.500H28"/></svg></div>
	<div class="cell"></div>
	<div class="cell"></div>
	<div class="cell views">
		<button class="view-btn" aria-label="Einzelne Seite"><svg width="12" height="16"><path class="f-paper" d="M.5 .5H8L11.500 4V15.500H.5Z"/><path d="M7.500 .5V4.500H11.500"/></svg></button>
		<button class="view-btn" aria-label="Mehrere Seiten"><svg width="25" height="16"><path class="f-navy" d="M0 0H8L12 4V16H0ZM13 0H21L25 4V16H13Z"/><path class="f-sky nostroke" d="M8 0L12 4H8ZM21 0L25 4H21Z"/></svg></button>
		<button class="view-btn" aria-label="Buchansicht"><svg width="24" height="16"><path class="f-paper" d="M.5 4L4 .5H11.500V15.500H.5ZM12.500 .5H20L23.500 4V15.500H12.500Z"/><path d="M4.500 .5V4.500H.5M19.500 .5V4.500H23.500"/></svg></button>
	</div>
	<div class="cell zoom">
		<button class="zoom-btn" aria-label="Verkleinern"><svg viewBox="0 0 10 10"><path class="w2" d="M0 5H10"/></svg></button>
		<input class="zoom-slider" type="range" min="0" max="98" value="48" aria-label="Maßstab">
		<button class="zoom-btn" aria-label="Vergrößern"><svg viewBox="0 0 10 10"><path class="w2" d="M0 5H10M5 0V10"/></svg></button>
	</div>
	<div class="cell percent">100&#8239;%</div>
</footer>

</body>
</html>
```
FILE: styles.css
```css
html, body {
	height: 100%;
	margin: 0;
	padding: 0;
	overflow: hidden;
}

body {
	display: flex;
	flex-direction: column;
	background: #f0f0f0;
	color: #000;
	font-family: "Noto Sans", "Open Sans", sans-serif;
	font-size: 11px;
}

button {
	margin: 0;
	padding: 0;
	border: 0;
	background: transparent;
	font: inherit;
	color: inherit;
}

svg {
	display: block;
	fill: none;
	stroke: #3a3a38;
}

.symbols {
	position: absolute;
	width: 0;
	height: 0;
}

/* icon colours */
.s-blue { stroke: #3d8fd4; }
.s-navy { stroke: #2566b8; }
.s-orange { stroke: #e68a28; }
.s-purple { stroke: #953fa6; }
.s-red { stroke: #dd3a35; }
.s-green { stroke: #3db35b; }
.s-mid { stroke: #6b6b69; }
.s-grey { stroke: #b5b5b5; }
.s-grey2 { stroke: #8c8c8c; }
.s-white { stroke: #fff; }
.f-paper { fill: #fafafa; }
.f-bg { fill: #fafafa; }
.f-side { fill: #f0f0f0; }
.f-sky { fill: #83b9ee; }
.f-yellow { fill: #f8dc92; }
.f-lilac { fill: #d093e0; }
.f-mid { fill: #767672; }
.f-grey { fill: #c4c4c4; }
.f-red { fill: #dd2a25; }
.f-pink { fill: #f29a98; }
.f-dim { fill: #dcdcdc; }
.f-black { fill: #000; stroke: none; }
.f-azure { fill: #3489d2; stroke: none; }
.f-amber { fill: #f8962d; stroke: none; }
.f-salmon { fill: #f9a893; stroke: none; }
.f-navy { fill: #2262b6; stroke: none; }
.f-light { fill: #f0f0f0; stroke: none; }
.f-app { fill: #2d83d2; stroke: none; }
.f-cyan { fill: #8de4f5; stroke: none; }
.nostroke { stroke: none; }
.w2 { stroke-width: 2; }

.t-dark { fill: #3a3a38; stroke: none; }
.t-blue { fill: #3d8fd4; stroke: none; }
.t-red { fill: #dd3a35; stroke: none; }
.t-white { fill: #fff; stroke: none; }
.t-outline { fill: #fafafa; stroke: #2566b8; }
.bold { font-weight: bold; }
.semi { font-weight: 600; }
.italic { font-style: italic; }

/* title bar */
.titlebar {
	display: flex;
	align-items: center;
	box-sizing: border-box;
	height: 23px;
	padding-bottom: 1px;
	background: #6c6ad8;
	color: #fff;
}

.app-icon {
	width: 14px;
	height: 16px;
	margin: 0 7px 0 3px;
}

.title {
	flex: 1;
	margin: 0;
	font-size: 11px;
	font-weight: normal;
}

.window-buttons {
	display: flex;
	padding-right: 2px;
}

.win-btn {
	display: flex;
	justify-content: center;
	width: 46px;
	padding-bottom: 2px;
}

.win-btn svg {
	width: 10px;
	height: 10px;
}

/* menu and toolbars */
.toolbars {
	background: linear-gradient(#fff, #fafafa 60%, #eee);
	border-bottom: 1px solid #a5a5a5;
}

.menubar {
	display: flex;
	align-items: center;
	height: 24px;
}

.menu-item {
	padding: 0 8px;
	line-height: 22px;
}

.close-doc {
	margin-left: auto;
	margin-right: 7px;
}

.close-doc svg {
	width: 8px;
	height: 8px;
}

.toolbar {
	display: flex;
	align-items: center;
	height: 34px;
	padding: 1px 3px 4px;
}

.format-bar {
	padding-bottom: 2px;
}

.tool {
	box-sizing: border-box;
	width: 33px;
	height: 34px;
	padding-left: 6px;
}

.icon {
	width: 24px;
	height: 24px;
	overflow: visible;
}

.tool.active {
	padding-left: 5px;
	border: 1px solid #9bcdf8;
	border-radius: 2px;
	background: #cde6ff;
}

.dim {
	stroke: #b8b8b8;
}

.split {
	display: flex;
}

.split .tool {
	padding-left: 4px;
}

.drop {
	width: 11px;
	padding: 5px 1px 0 3px;
}

.drop svg {
	width: 7px;
	height: 4px;
}

.drop:disabled {
	opacity: 0.4;
}

.sep {
	flex: none;
	width: 1px;
	height: 18px;
	margin: 0 3px 0 4px;
	background: #c2c2c2;
}

.combo {
	position: relative;
	height: 24px;
}

.combo select {
	appearance: none;
	box-sizing: border-box;
	width: 100%;
	height: 24px;
	padding: 0 18px 0 2px;
	border: 1px solid #e4e4e4;
	border-bottom-color: #858585;
	border-radius: 2px;
	background: #fff;
	font: inherit;
	color: #000;
}

.combo-arrow {
	position: absolute;
	top: 0;
	right: 0;
	bottom: 0;
	display: flex;
	align-items: center;
	justify-content: center;
	box-sizing: border-box;
	width: 17px;
	border: 1px solid #c6c6c6;
	border-radius: 2px;
	pointer-events: none;
}

.combo-arrow svg {
	width: 8px;
	height: 5px;
}

.combo-style {
	width: 167px;
	margin-left: 1px;
}

.combo-font {
	width: 183px;
	margin-left: 2px;
}

.combo-size {
	width: 58px;
	margin-left: 9px;
}

/* document area */
.workspace {
	display: flex;
	flex: 1;
	min-height: 0;
}

.editor {
	display: flex;
	flex: 1;
	flex-direction: column;
	background: #212121;
}

.ruler-row {
	display: flex;
	height: 19px;
	padding: 2px 0 24px;
}

.tab-type {
	width: 6px;
	height: 6px;
	margin: 8px 109px 0 9px;
}

.ruler {
	width: 795px;
	height: 20px;
}

.r-white { fill: #fff; stroke: none; }
.r-margin { fill: #f0f0f0; stroke: #a0a0a0; }
.r-tick { stroke: #8c8c8c; }
.r-tab { stroke: #5c5c5c; }
.r-marker { fill: #f0f0f0; stroke: #5c5c5c; }

.r-num {
	fill: #6e6e6e;
	stroke: none;
	font-size: 9px;
	text-anchor: middle;
}

.page {
	flex: 1;
	box-sizing: border-box;
	width: 794px;
	margin-left: 124px;
	padding: 76px;
	background: #fff;
}

.caret {
	display: block;
	width: 1px;
	height: 17px;
	background: #000;
}

.scrollbar {
	box-sizing: border-box;
	width: 17px;
	padding: 17px 7px 0;
	border-left: 1px solid #fff;
}

.thumb {
	width: 2px;
	height: 79.5%;
	background: #868686;
}

.sidebar {
	position: relative;
	display: flex;
	flex-direction: column;
	align-items: center;
	width: 41px;
	padding: 0 0 0 6px;
	border-left: 1px solid #a0a0a0;
}

.side-menu {
	padding: 11px 0 10px;
}

.side-menu svg {
	width: 10px;
	height: 7px;
}

.side-btn {
	box-sizing: border-box;
	height: 35px;
	padding-bottom: 1px;
}

.collapse {
	position: absolute;
	left: -1px;
	top: calc(50% - 37px);
	width: 7px;
	height: 73px;
	padding-left: 1px;
	background: #6a6a6a;
}

.collapse svg {
	width: 5px;
	height: 8px;
}

/* drawing toolbar */
.drawbar {
	display: flex;
	align-items: center;
	height: 34px;
	padding: 1px 4px 3px;
	border-top: 1px solid #a8a8a8;
	border-bottom: 1px solid #a0a0a0;
}

.drawbar > .tool {
	padding-left: 4px;
}

/* status bar */
.statusbar {
	display: grid;
	grid-template-columns: 32px 280px 317px 46px 261px 334px 69px 46px 30px 1fr 88px 144px 48px;
	height: 21px;
	padding: 0 1px 0 0;
}

.cell {
	display: flex;
	align-items: center;
	height: 16px;
	margin-top: 2px;
	padding-left: 9px;
	border-left: 1px solid #c2c2c2;
	white-space: nowrap;
}

.cell:first-child {
	border-left: 0;
	padding-left: 10px;
}

.center {
	justify-content: center;
	padding-left: 0;
}

.small-icon {
	width: 16px;
	height: 16px;
}

.select-icon {
	width: 28px;
	height: 16px;
}

.views {
	gap: 6px;
	padding-left: 8px;
}

.zoom {
	gap: 5px;
}

.zoom-btn svg {
	width: 10px;
	height: 10px;
}

.zoom-slider {
	appearance: none;
	width: 98px;
	height: 16px;
	margin: 0;
	background: linear-gradient(#6b6b69, #6b6b69) 36px 6px / 2px 5px no-repeat, linear-gradient(#7c7c7a, #7c7c7a) 0 8px / 100% 2px no-repeat;
}

.zoom-slider::-webkit-slider-thumb {
	appearance: none;
	box-sizing: border-box;
	width: 4px;
	height: 10px;
	border: 1px solid #3a3a38;
	background: #d8d8d8;
}
```
